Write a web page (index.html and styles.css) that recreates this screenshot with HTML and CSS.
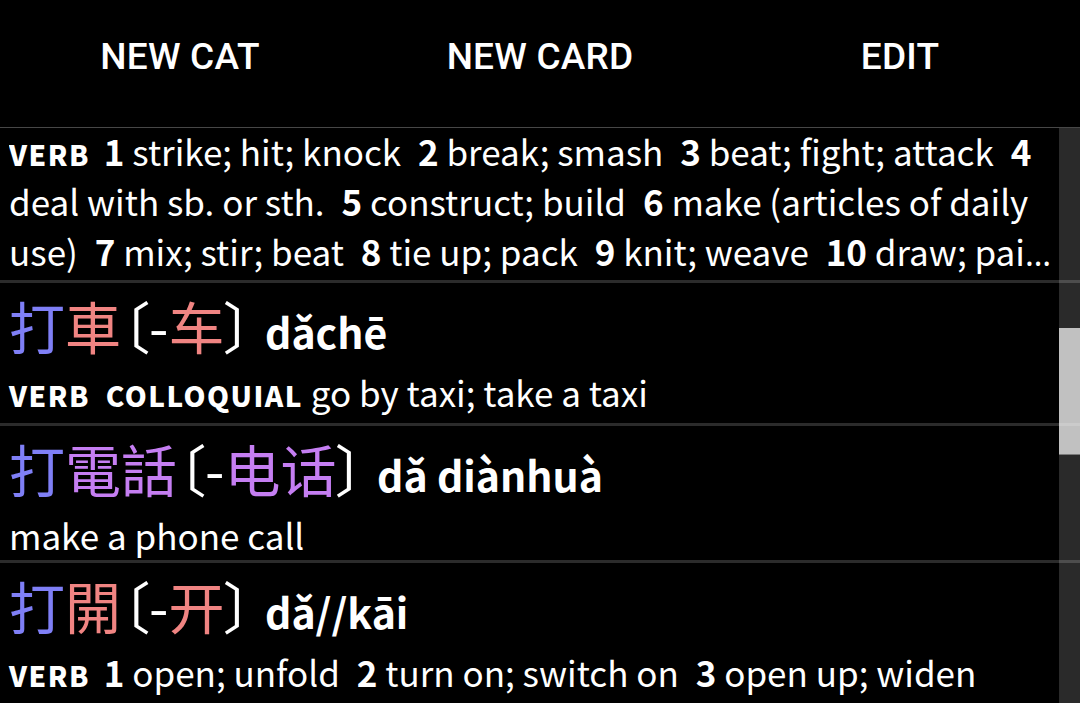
FILE: index.html
```html
<!DOCTYPE html>
<html lang="zh">
<head>
<meta charset="utf-8">
<title>Cards</title>
<link rel="stylesheet" href="styles.css">
</head>
<body>
<header class="toolbar">
  <button class="tb-btn">NEW CAT</button>
  <button class="tb-btn">NEW CARD</button>
  <button class="tb-btn">EDIT</button>
</header>
<main class="list">
  <div class="scrollbar"><div class="thumb"></div></div>
  <section class="entry entry-tail">
    <p class="def clamp"><span class="lbl">verb</span> <b class="n">1</b> strike; hit; knock <b class="n">2</b> break; smash <b class="n">3</b> beat; fight; attack <b class="n">4</b> deal with sb. or sth. <b class="n">5</b> construct; build <b class="n">6</b> make (articles of daily use) <b class="n">7</b> mix; stir; beat <b class="n">8</b> tie up; pack <b class="n">9</b> knit; weave <b class="n">10</b> draw; pai<span class="ell">…</span></p>
  </section>
  <section class="entry entry-tall">
    <div class="hw"><span class="t3">打</span><span class="t1">車</span><span class="br">〔</span>-<span class="t1">车</span><span class="br">〕</span> <span class="py">dǎchē</span></div>
    <p class="def"><span class="lbl">verb</span> <span class="lbl">colloquial</span> go by taxi; take a taxi</p>
  </section>
  <section class="entry">
    <div class="hw"><span class="t3">打</span><span class="t4">電話</span><span class="br">〔</span>-<span class="t4">电话</span><span class="br">〕</span> <span class="py">dǎ diànhuà</span></div>
    <p class="def">make a phone call</p>
  </section>
  <section class="entry">
    <div class="hw"><span class="t3">打</span><span class="t1">開</span><span class="br">〔</span>-<span class="t1">开</span><span class="br">〕</span> <span class="py">dǎ//kāi</span></div>
    <p class="def"><span class="lbl">verb</span> <b class="n">1</b> open; unfold <b class="n">2</b> turn on; switch on <b class="n">3</b> open up; widen</p>
  </section>
</main>
</body>
</html>
```

FILE: styles.css
```css
html, body {
  margin: 0;
  padding: 0;
  background: #000;
  height: 100%;
  overflow: hidden;
}

body {
  color: #fff;
  font-family: "Noto Sans CJK SC", "Noto Sans", sans-serif;
}

.toolbar {
  display: grid;
  grid-template-columns: repeat(3, 1fr);
  height: 127px;
  border-bottom: 1px solid #474747;
}

.tb-btn {
  background: transparent;
  border: 0;
  color: #fff;
  font-family: Roboto, "Liberation Sans", sans-serif;
  font-weight: 500;
  font-size: 37px;
  letter-spacing: 0.2px;
  padding: 0 0 15px 0;
  display: flex;
  align-items: center;
  justify-content: center;
}

.list {
  position: relative;
  height: calc(100% - 128px);
  overflow: hidden;
}

.scrollbar {
  position: absolute;
  top: 0;
  right: 0;
  bottom: 0;
  width: 21px;
  background: #2a2a2a;
}

.thumb {
  position: absolute;
  top: 200px;
  left: 0;
  right: 0;
  height: 126px;
  background: #c1c1c1;
  border-bottom: 1px solid #7a7a7a;
}

.entry {
  position: relative;
  border-top: 3px solid rgba(255, 255, 255, 0.17);
  padding: 0 20px 0 9px;
}

.entry-tail {
  border-top: 0;
  margin-top: -2px;
  padding-bottom: 4px;
}

.entry-tall {
  padding-bottom: 6px;
}

.def {
  margin: 0;
  font-size: 35px;
  line-height: 50px;
}

.clamp {
  height: 150px;
  overflow: hidden;
}

.ell {
  font-family: "Noto Sans", "Liberation Sans", sans-serif;
  font-size: 33px;
}

.lbl {
  font-weight: 900;
  text-transform: uppercase;
  font-size: 28px;
  line-height: 1;
  letter-spacing: 1.5px;
}

.lbl + .lbl {
  margin-left: 8px;
}

.n {
  font-weight: 700;
  margin-left: 9px;
}

.lbl + .n {
  margin-left: 6px;
}

.hw {
  font-size: 56px;
  line-height: 84px;
  white-space: nowrap;
}

.br {
  font-feature-settings: "palt";
}

.py {
  font-size: 41px;
  font-weight: 700;
  line-height: 1;
}

.t1 { color: #f08482; }
.t3 { color: #7f7ff6; }
.t4 { color: #c57ef2; }
```
